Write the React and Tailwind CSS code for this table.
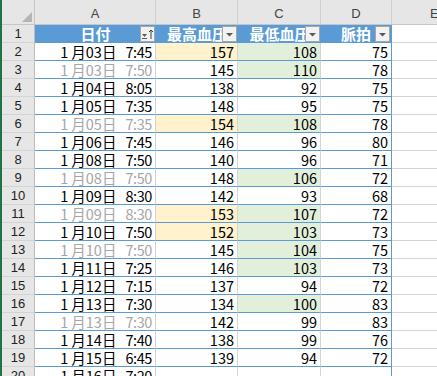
import React from "react";

const rows = [
  { n: 2, d: "03", t: "7:45", hi: 157, lo: 108, p: 75, hy: true, lg: true },
  { n: 3, d: "03", t: "7:50", hi: 145, lo: 110, p: 78, dim: true, lg: true },
  { n: 4, d: "04", t: "8:05", hi: 138, lo: 92, p: 75 },
  { n: 5, d: "05", t: "7:35", hi: 148, lo: 95, p: 75 },
  { n: 6, d: "05", t: "7:35", hi: 154, lo: 108, p: 78, dim: true, hy: true, lg: true },
  { n: 7, d: "06", t: "7:45", hi: 146, lo: 96, p: 80 },
  { n: 8, d: "08", t: "7:50", hi: 140, lo: 96, p: 71 },
  { n: 9, d: "08", t: "7:50", hi: 148, lo: 106, p: 72, dim: true, lg: true },
  { n: 10, d: "09", t: "8:30", hi: 142, lo: 93, p: 68 },
  { n: 11, d: "09", t: "8:30", hi: 153, lo: 107, p: 72, dim: true, hy: true, lg: true },
  { n: 12, d: "10", t: "7:50", hi: 152, lo: 103, p: 73, hy: true, lg: true },
  { n: 13, d: "10", t: "7:50", hi: 145, lo: 104, p: 75, dim: true, lg: true },
  { n: 14, d: "11", t: "7:25", hi: 146, lo: 103, p: 73, lg: true },
  { n: 15, d: "12", t: "7:15", hi: 137, lo: 94, p: 72 },
  { n: 16, d: "13", t: "7:30", hi: 134, lo: 100, p: 83, lg: true },
  { n: 17, d: "13", t: "7:30", hi: 142, lo: 99, p: 83, dim: true },
  { n: 18, d: "14", t: "7:40", hi: 138, lo: 99, p: 76 },
  { n: 19, d: "15", t: "6:45", hi: 139, lo: 94, p: 72 },
  { n: 20, d: "16", t: "7:20", hi: "", lo: "", p: "" },
];

const FilterBtn = ({ sorted }) => (
  <div className="absolute right-[1px] top-[1px] w-[15px] h-[16px] bg-[#f2f2f2] border border-[#a6a6a6] flex items-center justify-center">
    <svg width="13" height="14" viewBox="0 0 13 14">
      {sorted ? (
        <>
          <polygon points="1,7 6,7 3.5,10" fill="#595959" />
          <line x1="1" y1="11.5" x2="6" y2="11.5" stroke="#595959" strokeWidth="1" />
          <line x1="10" y1="3" x2="10" y2="12" stroke="#404040" strokeWidth="1" />
          <polyline points="8,5 10,3 12,5" fill="none" stroke="#404040" strokeWidth="1" />
        </>
      ) : (
        <polygon points="3,6 10,6 6.5,9.5" fill="#595959" />
      )}
    </svg>
  </div>
);

const HeadCell = ({ w, label, sorted, last }) => (
  <div
    className={`relative h-full bg-[#5b9bd5] border-b border-[#5b9bd5] overflow-hidden flex items-start pt-[1px] justify-center text-white font-bold text-[15px] leading-[16px] ${w} ${
      last ? "border-r border-r-[#5b9bd5]" : ""
    }`}
  >
    <span className="whitespace-nowrap">{label}</span>
    <FilterBtn sorted={sorted} />
  </div>
);

const NumCell = ({ w, v, bg, last }) => (
  <div
    className={`h-full border-b border-[#5b9bd5] flex items-start pt-[1px] justify-end pr-[3px] ${w} ${bg || "bg-white"} ${
      last ? "border-r border-r-[#5b9bd5]" : "border-r border-r-[#d4d4d4]"
    }`}
  >
    {v}
  </div>
);

const RowNum = ({ n }) => (
  <div className="w-[33px] h-full bg-[#e6e6e6] border-r border-r-[#bcbcbc] border-b border-b-[#d4d4d4] flex items-center justify-center text-[13px] leading-[16px] text-[#222] font-['Liberation_Sans',sans-serif]">
    {n}
  </div>
);

export default function App() {
  return (
    <div className="w-[437px] h-[376px] overflow-hidden bg-white flex font-['Noto_Sans_CJK_JP',sans-serif] text-[14.5px] leading-[16px] text-black">
      <div className="w-[2px] h-full bg-[#217346] shrink-0" />
      <div className="flex-1 flex flex-col">
        {/* column letters */}
        <div className="flex h-[25px] shrink-0 bg-[#e6e6e6] border-b border-[#c6c6c6] text-[#444] font-['Liberation_Sans',sans-serif] text-[13px]">
          <div className="w-[33px] h-full border-r border-[#c6c6c6] flex items-end justify-end pr-[2px] pb-[2px]">
            <svg width="10" height="10" viewBox="0 0 10 10">
              <polygon points="10,0 10,10 0,10" fill="#b4b4b4" />
            </svg>
          </div>
          <div className="w-[121px] h-full border-r border-[#d0d0d0] flex items-center justify-center pt-[3px]">A</div>
          <div className="w-[82px] h-full border-r border-[#d0d0d0] flex items-center justify-center pt-[3px]">B</div>
          <div className="w-[83px] h-full border-r border-[#d0d0d0] flex items-center justify-center pt-[3px]">C</div>
          <div className="w-[71px] h-full border-r border-[#d0d0d0] flex items-center justify-center pt-[3px]">D</div>
          <div className="flex-1 h-full flex items-center pl-[38px] pt-[3px]">E</div>
        </div>

        {/* table header row */}
        <div className="flex h-[18px] shrink-0">
          <RowNum n={1} />
          <HeadCell w="w-[121px]" label="日付" sorted />
          <HeadCell w="w-[82px]" label="最高血圧" />
          <HeadCell w="w-[83px]" label="最低血圧" />
          <HeadCell w="w-[71px]" label="脈拍" last />
          <div className="flex-1 h-full border-b border-[#d4d4d4]" />
        </div>

        {rows.map((r) => (
          <div key={r.n} className="flex h-[18px] shrink-0">
            <RowNum n={r.n} />
            <div
              className={`w-[121px] h-full border-b border-[#5b9bd5] border-r border-r-[#d4d4d4] flex items-start pt-[1px] justify-end pr-[3px] whitespace-nowrap ${
                r.dim ? "text-[#a6a6a6]" : "text-black"
              }`}
            >
              <span className="mr-[3px]">1</span>
              <span>月{r.d}日</span>
              <span className="ml-[9px] tracking-[-0.4px]">{r.t}</span>
            </div>
            <NumCell w="w-[82px]" v={r.hi} bg={r.hy ? "bg-[#fff2cc]" : ""} />
            <NumCell w="w-[83px]" v={r.lo} bg={r.lg ? "bg-[#e2efda]" : ""} />
            <NumCell w="w-[71px]" v={r.p} last />
            <div className="flex-1 h-full border-b border-[#d4d4d4]" />
          </div>
        ))}
      </div>
    </div>
  );
}
